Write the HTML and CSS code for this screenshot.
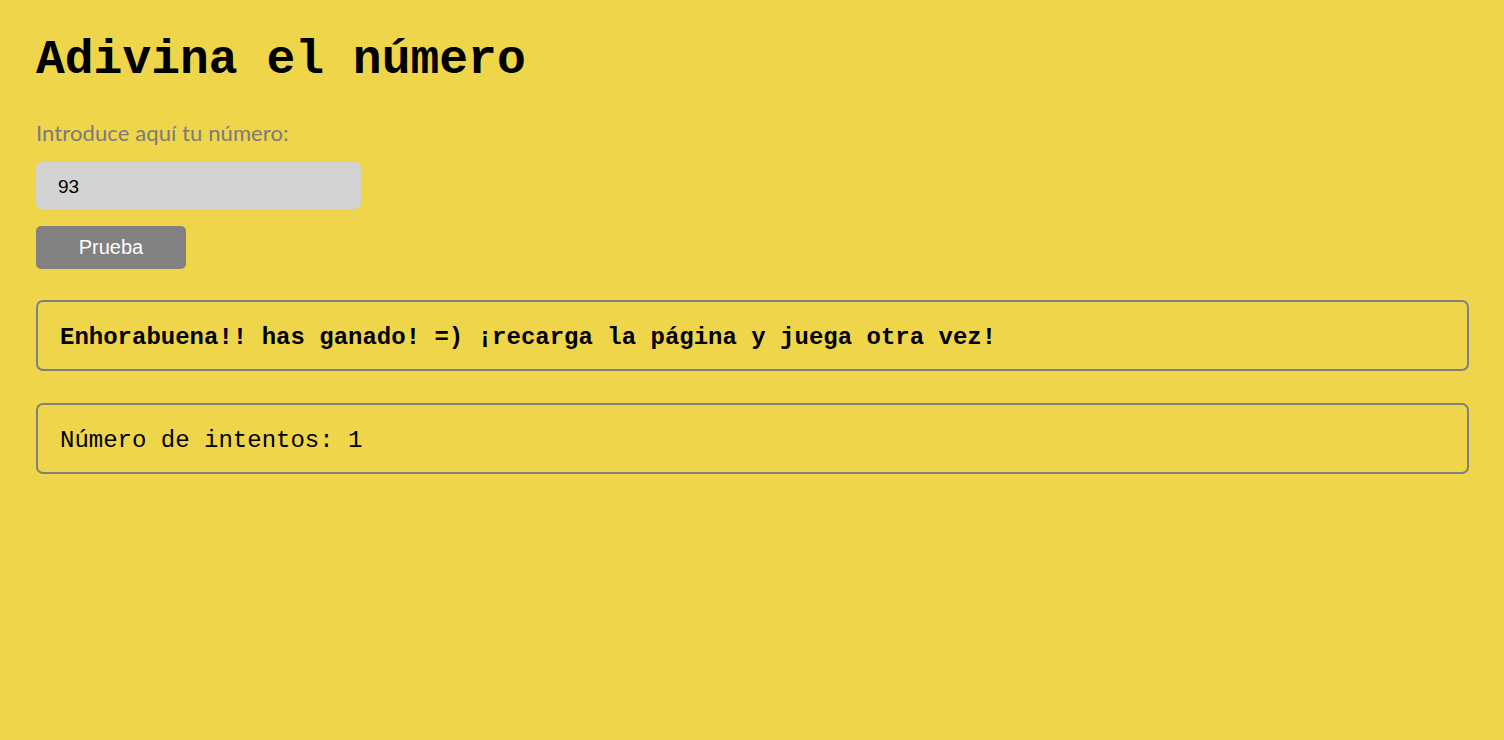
FILE: index.html
```html
<!DOCTYPE html>
<html lang="es">
<head>
<meta charset="utf-8">
<title>Adivina el número</title>
<link rel="stylesheet" href="styles.css">
</head>
<body>
<main class="page">
  <h1 class="title">Adivina el número</h1>
  <form class="form">
    <label class="label" for="guess">Introduce aquí tu número:</label>
    <input class="field" id="guess" type="text" value="93">
    <button class="btn" type="button">Prueba</button>
  </form>
  <p class="box box-bold">Enhorabuena!! has ganado! =) ¡recarga la página y juega otra vez!</p>
  <p class="box">Número de intentos: 1</p>
</main>
</body>
</html>
```
FILE: styles.css
```css
html, body {
  margin: 0;
  padding: 0;
  background: #efd549;
}
.page {
  padding: 33px 35px 0 36px;
  display: flex;
  flex-direction: column;
  align-items: stretch;
}
.title {
  margin: 0;
  font-family: "Liberation Mono", "Courier New", monospace;
  font-weight: bold;
  font-size: 48px;
  line-height: 54px;
  color: #000;
}
.form {
  display: flex;
  flex-direction: column;
  align-items: flex-start;
  margin-top: 33px;
}
.label {
  font-family: Lato, "Noto Sans", sans-serif;
  font-size: 22px;
  line-height: 26px;
  color: #7b7b7b;
  letter-spacing: 0.1px;
}
.field {
  margin-top: 16px;
  box-sizing: border-box;
  width: 325px;
  height: 47px;
  border: none;
  border-radius: 6px;
  background: #d3d3d3;
  padding: 2px 22px 0;
  font-family: "Liberation Sans", Arial, sans-serif;
  font-size: 19px;
  color: #000;
  outline: none;
}
.btn {
  margin-top: 17px;
  box-sizing: border-box;
  width: 150px;
  height: 43px;
  border: none;
  border-radius: 5px;
  background: #818181;
  color: #fff;
  font-family: "Liberation Sans", Arial, sans-serif;
  font-size: 20px;
  padding: 0;
}
.box {
  margin: 31px 0 0 0;
  border: 2px solid #808080;
  border-radius: 7px;
  padding: 22px 22px 18px;
  font-family: "Liberation Mono", "Courier New", monospace;
  font-size: 24px;
  line-height: 27px;
  color: #000;
}
.box + .box {
  margin-top: 32px;
}
.box-bold {
  font-weight: bold;
}
```
